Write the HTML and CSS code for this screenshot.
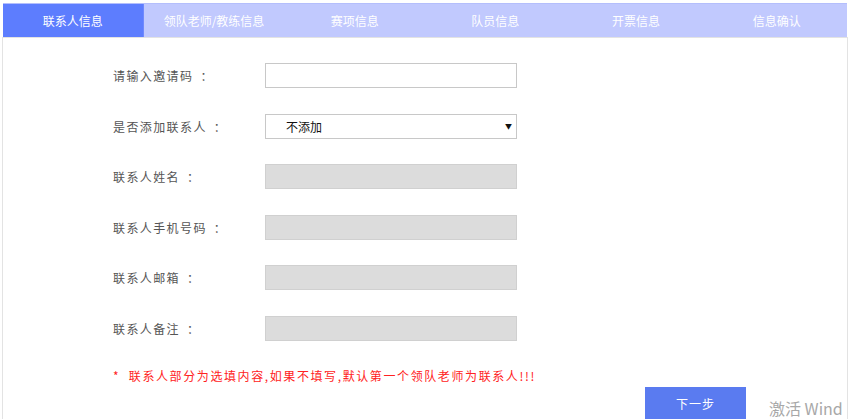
FILE: index.html
```html
<!DOCTYPE html>
<html lang="zh-CN">
<head>
<meta charset="utf-8">
<title>联系人信息</title>
<link rel="stylesheet" href="styles.css">
</head>
<body>
<div class="page">
  <div class="tabs">
    <div class="tab active">联系人信息</div>
    <div class="tab">领队老师/教练信息</div>
    <div class="tab">赛项信息</div>
    <div class="tab">队员信息</div>
    <div class="tab">开票信息</div>
    <div class="tab">信息确认</div>
  </div>
  <div class="panel">
    <div class="form">
      <div class="row">
        <label class="label">请输入邀请码<span class="colon">：</span></label>
        <input class="field" type="text">
      </div>
      <div class="row">
        <label class="label">是否添加联系人<span class="colon">：</span></label>
        <div class="select-wrap">
          <select class="field select"><option>不添加</option></select>
          <span class="arrow">▼</span>
        </div>
      </div>
      <div class="row">
        <label class="label">联系人姓名<span class="colon">：</span></label>
        <input class="field disabled" type="text" disabled>
      </div>
      <div class="row">
        <label class="label">联系人手机号码<span class="colon">：</span></label>
        <input class="field disabled" type="text" disabled>
      </div>
      <div class="row">
        <label class="label">联系人邮箱<span class="colon">：</span></label>
        <input class="field disabled" type="text" disabled>
      </div>
      <div class="row">
        <label class="label">联系人备注<span class="colon">：</span></label>
        <input class="field disabled" type="text" disabled>
      </div>
      <p class="note">*&nbsp; 联系人部分为选填内容,如果不填写,默认第一个领队老师为联系人!!!</p>
    </div>
    <div class="actions">
      <button class="next" type="button">下一步</button>
    </div>
  </div>
  <div class="watermark">激活 Wind</div>
</div>
</body>
</html>
```
FILE: styles.css
```css
html, body {
  margin: 0;
  padding: 0;
  background: #fff;
  overflow: hidden;
}
body {
  font-family: "Noto Sans CJK SC", "Microsoft YaHei", sans-serif;
  font-size: 12px;
  color: #555;
}
.page {
  position: relative;
  margin: 3px 2px 0 2px;
  height: 416px;
  overflow: hidden;
}
.tabs {
  display: grid;
  grid-template-columns: repeat(6, 1fr);
  margin: 0 1px;
  height: 34px;
  background: #c1c9fe;
  border-top: 1px solid #b4befc;
  box-sizing: border-box;
}
.tab {
  display: flex;
  align-items: center;
  justify-content: center;
  color: #fff;
  font-size: 12px;
}
.tab.active {
  background: #5d7dfe;
  border-right: 1px solid #7089fd;
}
.panel {
  border: 1px solid #e3e3e3;
  border-bottom: none;
  height: 400px;
  box-sizing: border-box;
}
.form {
  padding: 25px 0 0 110px;
}
.row {
  display: flex;
  align-items: center;
  height: 25px;
  margin-bottom: 25.6px;
}
.label {
  width: 152px;
  letter-spacing: 1.4px;
  color: #555;
  font-size: 12px;
  white-space: nowrap;
}
.colon {
  margin-left: 7px;
}
.field {
  width: 252px;
  height: 25px;
  box-sizing: border-box;
  border: 1px solid #c8c8c8;
  background: #fff;
  margin: 0;
  padding: 0 20px;
  font-family: inherit;
  font-size: 12px;
  color: #222;
  outline: none;
}
.field.disabled {
  background: #dcdcdc;
  border-color: #d0d0d0;
}
.select-wrap {
  position: relative;
  width: 252px;
  height: 25px;
}
.select {
  -webkit-appearance: none;
  appearance: none;
  border-radius: 0;
  color: #111;
}
.arrow {
  position: absolute;
  right: 5px;
  top: 7px;
  font-size: 7px;
  color: #111;
  pointer-events: none;
}
.note {
  margin: 15px 0 0 0;
  color: #f22;
  letter-spacing: 1.6px;
  font-size: 12px;
}
.actions {
  display: flex;
  justify-content: flex-end;
  padding: 3px 101px 0 0;
}
.next {
  width: 101px;
  height: 36px;
  border: none;
  background: #5a7bf0;
  color: #fff;
  font-family: inherit;
  font-size: 12px;
  letter-spacing: 1px;
  padding: 0 0 2px 0;
}
.watermark {
  position: absolute;
  left: 767px;
  top: 393px;
  font-size: 16px;
  color: #a8a8a8;
  white-space: nowrap;
}
```
